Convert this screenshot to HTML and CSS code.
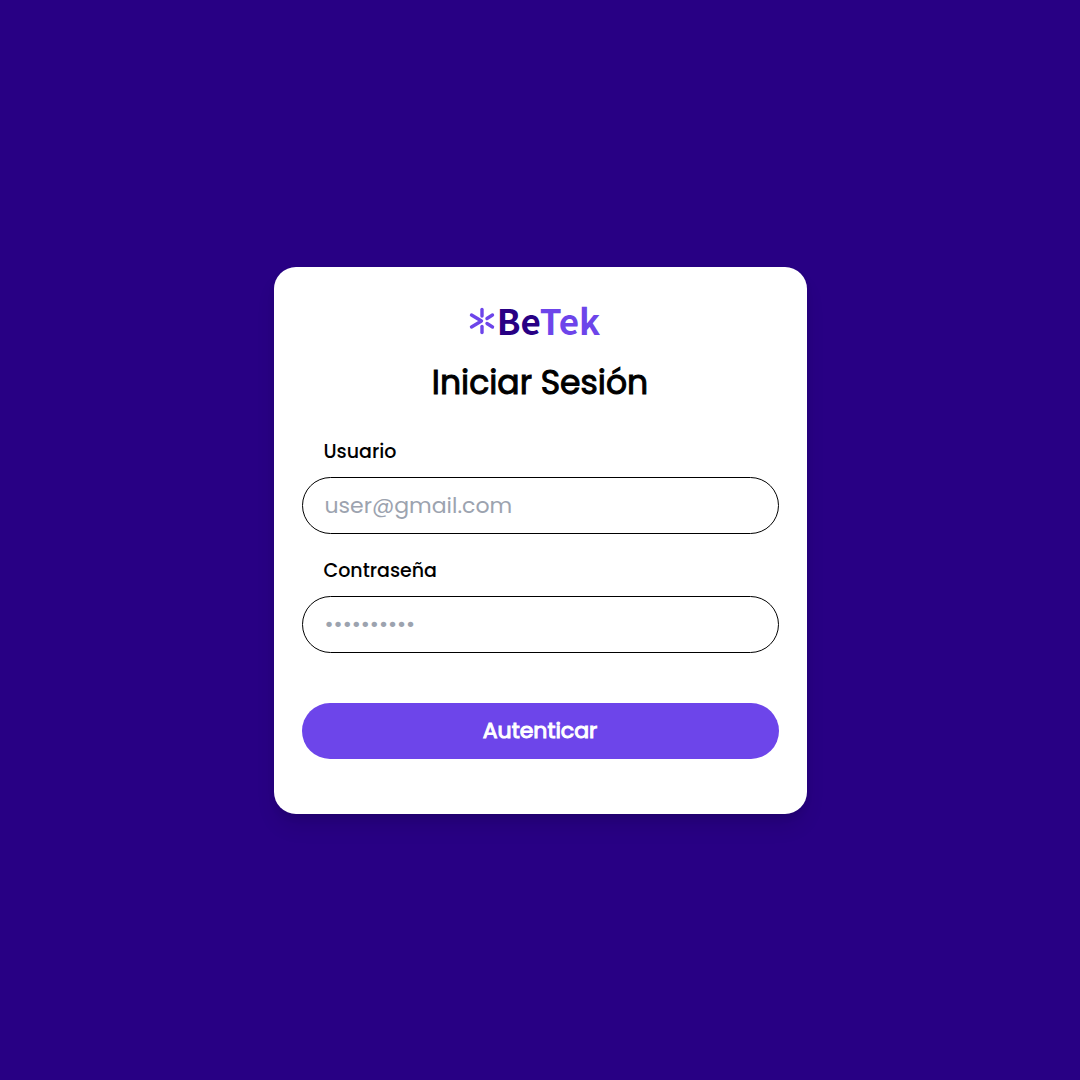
FILE: index.html
```html
<!DOCTYPE html>
<html lang="es">
<head>
<meta charset="utf-8">
<meta name="viewport" content="width=device-width, initial-scale=1">
<title>BeTek - Iniciar Sesión</title>
<link rel="stylesheet" href="styles.css">
</head>
<body>
<main class="card">
  <div class="logo">
    <svg class="logo-mark" viewBox="0 0 26 28" aria-hidden="true">
      <g fill="none" stroke="#6d45ea" stroke-width="3.400" stroke-linecap="round" stroke-linejoin="round">
        <path d="M13 2.500V9"/>
        <path d="M13 19.500V25.500"/>
        <path d="M2.500 8L12.500 14L2.500 20"/>
        <path d="M18 11.500L23.500 8"/>
        <path d="M18 16.500L23.500 20"/>
      </g>
    </svg>
    <span class="logo-text">Be<span class="logo-accent">Tek</span></span>
  </div>
  <h1 class="title">Iniciar Sesión</h1>
  <form class="form">
    <div class="field">
      <label class="label" for="user">Usuario</label>
      <input class="input" id="user" type="email" placeholder="user@gmail.com">
    </div>
    <div class="field">
      <label class="label" for="password">Contraseña</label>
      <input class="input" id="password" type="password" placeholder="••••••••••">
    </div>
    <button class="submit" type="submit">Autenticar</button>
  </form>
</main>
</body>
</html>
```
FILE: styles.css
```css
* {
  box-sizing: border-box;
}

body {
  margin: 0;
  min-height: 100vh;
  display: flex;
  align-items: center;
  justify-content: center;
  background: #280084;
  color: #000;
  font-family: Poppins, Inter, sans-serif;
}

.card {
  width: 100%;
  max-width: 533px;
  padding: 36px 28px 55px;
  border-radius: 22px;
  background: #fff;
  box-shadow: 0 14px 22px -4px rgba(0, 0, 0, 0.12), 0 4px 8px -2px rgba(0, 0, 0, 0.1);
}

.logo {
  display: flex;
  align-items: center;
  justify-content: center;
  gap: 2px;
  height: 36px;
  padding-right: 11px;
}

.logo-mark {
  width: 26px;
  height: 28px;
}

.logo-text {
  color: #280084;
  font: 700 35px/34px "Noto Sans CJK SC", sans-serif;
  padding-bottom: 2px;
}

.logo-accent {
  color: #6d45ea;
}

.title {
  margin: 22px 0 33px;
  font-size: 33px;
  font-weight: 400;
  line-height: 44px;
  text-align: center;
  -webkit-text-stroke: 1px currentColor;
}

.form {
  display: flex;
  flex-direction: column;
  gap: 23px;
}

.field {
  display: flex;
  flex-direction: column;
  gap: 11px;
}

.label {
  padding-left: 22px;
  font-size: 19px;
  font-weight: 500;
  line-height: 28px;
}

.input {
  width: 100%;
  height: 57px;
  padding: 0 22px;
  border: 1px solid #000;
  border-radius: 29px;
  background: #fff;
  color: #000;
  font-family: inherit;
  font-size: 22px;
}

.input::placeholder {
  color: #9ca3af;
  opacity: 1;
}

.submit {
  height: 56px;
  margin-top: 27px;
  border: 0;
  border-radius: 28px;
  background: #6d45ea;
  color: #fff;
  font-family: inherit;
  font-size: 22px;
  font-weight: 400;
  -webkit-text-stroke: 1px currentColor;
  cursor: pointer;
}
```
